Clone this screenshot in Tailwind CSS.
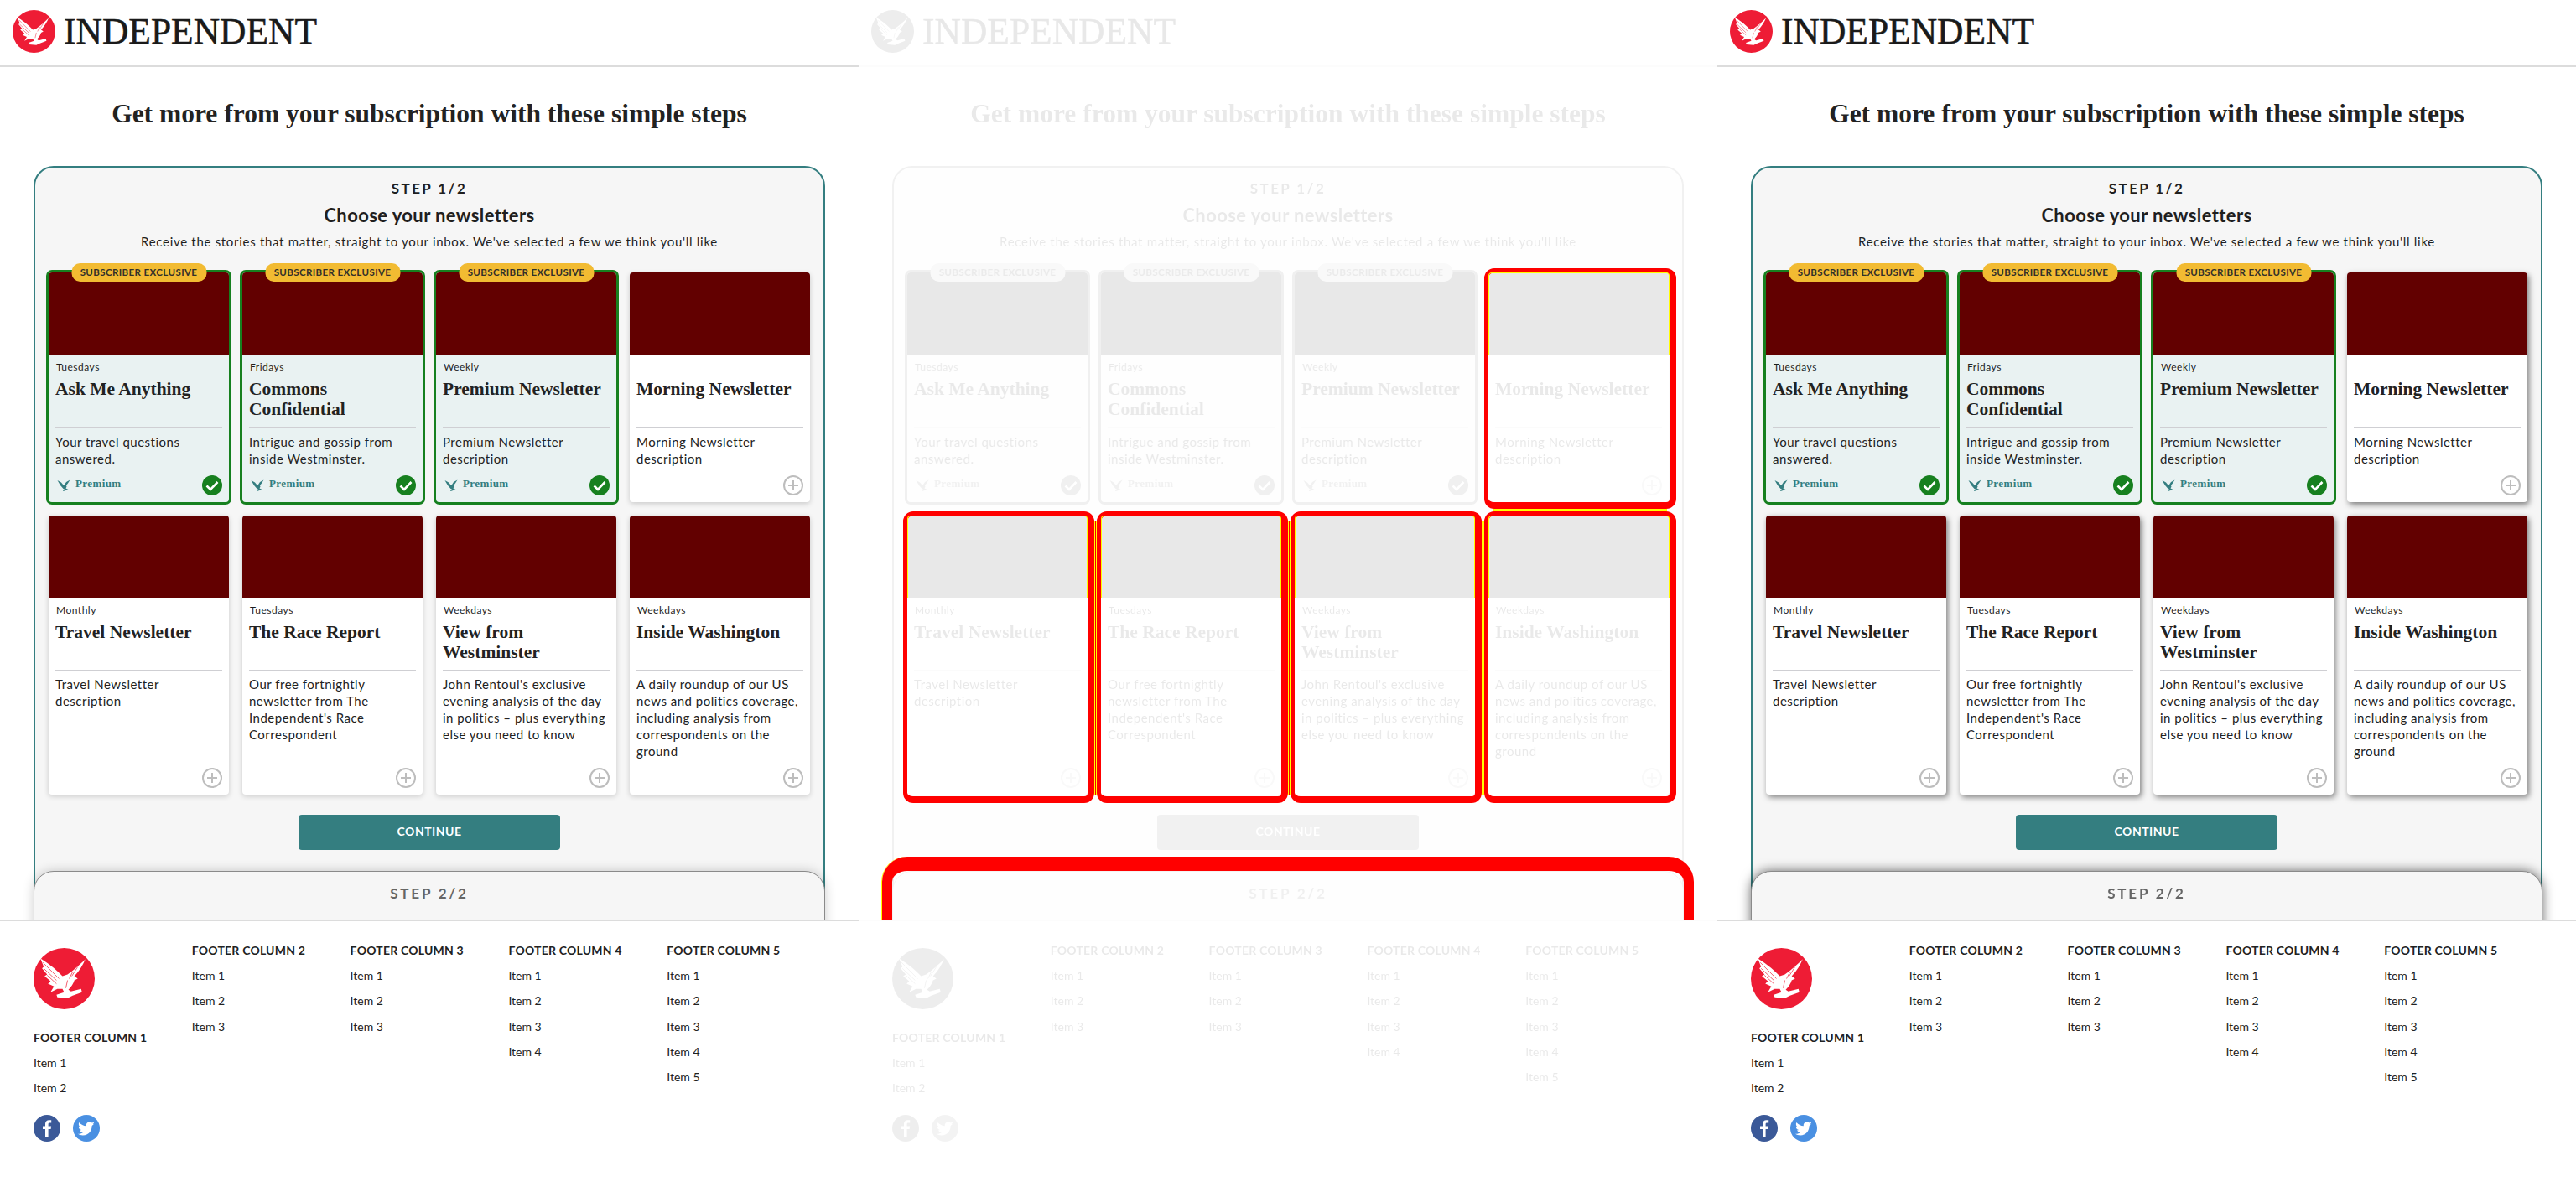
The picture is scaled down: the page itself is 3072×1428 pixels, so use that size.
<!DOCTYPE html>
<html lang="en">
<head>
  <meta charset="UTF-8">
  <title>Independent newsletters</title>
  <script src="https://cdn.jsdelivr.net/npm/@tailwindcss/browser@4"></script>
</head>
<body class="bg-white w-[3072px] h-[1428px] overflow-hidden font-['Lato',sans-serif] text-[#1f1f1f]">
  <div id="root" class="flex w-[3072px] h-[1428px]"></div>
  <template id="panel-tpl">
    <section class="panel relative w-[1024px] h-[1428px] shrink-0 overflow-hidden bg-white">
      <div class="faded h-full">
        <header class="h-[80px] border-b-2 border-[#dcdcdc] flex items-center pl-[15px] pb-[3px] gap-[10px]">
          <svg class="logo w-[51px] h-[51px]" viewBox="0 0 72 72"></svg>
          <span class="font-['Liberation_Serif',serif] text-[43.5px] leading-none text-[#1a1a1a] [-webkit-text-stroke:0.5px_#1a1a1a]">INDEPENDENT</span>
        </header>
        <main class="relative h-[1017px] overflow-hidden">
          <h1 class="font-['Liberation_Serif',serif] font-bold text-[31.5px] leading-[40px] text-center text-[#222] mt-[36px]">Get more from your subscription with these simple steps</h1>
          <div class="mx-[40px] mt-[42px] h-[900px] rounded-[24px] border-2 border-[#347e80] bg-[#f6f6f6] px-[16px] pt-[13px]">
            <p class="text-center font-bold text-[17px] leading-[24px] tracking-[2.4px]">STEP 1/2</p>
            <p class="text-center font-bold text-[22px] leading-[28px] tracking-[0.4px] mt-[6px]">Choose your newsletters</p>
            <p class="text-center text-[15px] leading-[20px] tracking-[0.7px] mt-[7px]">Receive the stories that matter, straight to your inbox. We've selected a few we think you'll like</p>
            <div class="cards grid grid-cols-4 gap-x-[16px] gap-y-[16px] mt-[27px]"></div>
            <button class="block mx-auto mt-[24px] w-[312px] h-[42px] rounded-[4px] bg-[#347e80] text-white font-bold text-[14px] tracking-[0.5px] pb-[4px]">CONTINUE</button>
          </div>
          <div class="step-two absolute left-[40px] top-[959px] w-[944px] h-[120px] rounded-[24px] border border-[#8a8a8a] bg-[#f6f6f6] text-center pt-[14px] font-bold text-[17px] leading-[24px] tracking-[2.8px] text-[#666]">STEP 2/2</div>
        </main>
        <footer class="relative bg-white border-t-2 border-[#dcdcdc] h-[331px] px-[40px] pt-[25px] grid grid-cols-5 items-start">
          <div class="col-one pt-[7px]"></div>
        </footer>
      </div>
    </section>
  </template>

  <script>
    const newsletters = [
      { tag: "Tuesdays", title: "Ask Me Anything", desc: "Your travel questions answered.", on: true },
      { tag: "Fridays", title: "Commons Confidential", desc: "Intrigue and gossip from inside Westminster.", on: true },
      { tag: "Weekly", title: "Premium Newsletter", desc: "Premium Newsletter description", on: true },
      { tag: "", title: "Morning Newsletter", desc: "Morning Newsletter description" },
      { tag: "Monthly", title: "Travel Newsletter", desc: "Travel Newsletter description" },
      { tag: "Tuesdays", title: "The Race Report", desc: "Our free fortnightly newsletter from The Independent's Race Correspondent" },
      { tag: "Weekdays", title: "View from Westminster", desc: "John Rentoul's exclusive evening analysis of the day in politics – plus everything else you need to know" },
      { tag: "Weekdays", title: "Inside Washington", desc: "A daily roundup of our US news and politics coverage, including analysis from correspondents on the ground" },
    ];

    // red roundel with the eagle, feather lines cut back in red
    const roundel = `
      <circle cx="36" cy="36" r="36" fill="#ee1c35"/>
      <path fill="#fff" d="M8 12C14 16 26 24 34 33L40 31C46 27 54 20 61 13C58 20 54 27 48 33L52 36L48 38C47 42 44 46 41 49L44 51L56 48L57 52L46 56L40 59L28 58L27 55L36 52L34 48L28 48L20 52L24 45L17 42L20 39L13 33L16 31L10 24L12 22Z"/>
      <path fill="none" stroke="#ee1c35" stroke-width="0.7" d="M11 17L30 36M12 24L27 38M16 32L27 42M46 28L42 36M52 22L45 33M40 38L38 47"/>`;

    function cardHtml(n, shadow) {
      return `
      <article class="relative flex flex-col rounded-[4px] ${n.on ? "bg-[#e9f2f2] outline-[3px] outline-[#17801f]" : "bg-white " + shadow}">
        ${n.on ? `<span class="absolute left-1/2 -translate-x-1/2 -top-[11px] w-[161px] h-[22px] rounded-[10px] bg-[#f2bb32] text-center text-[11.5px] leading-[22px] font-bold tracking-[0.4px] text-[#33302a]">SUBSCRIBER EXCLUSIVE</span>` : ""}
        <div class="h-[98px] rounded-t-[4px] bg-[#620000]"></div>
        <div class="flex flex-col flex-1 px-[8px] pt-[8px] pb-[8px]">
          <p class="h-[14px] text-[12px] leading-[14px] tracking-[0.5px] pl-[1px]">${n.tag}</p>
          <h3 class="h-[48px] mt-[7px] font-['Liberation_Serif',serif] font-bold text-[21.5px] leading-[24px] text-[#222]">${n.title}</h3>
          <div class="h-[1.5px] mt-[9px] bg-[#cfcfd3]"></div>
          <p class="mt-[6px] flex-1 text-[15px] leading-[20px] tracking-[0.5px] text-[#222]">${n.desc}</p>
          <div class="flex items-center justify-between h-[24px] mt-[10px]">
            ${n.on ? `<span class="flex items-center gap-[5px] pl-[2px] text-[#347e80]">
              <svg class="w-[17px] h-[16px]" viewBox="0 0 34 30" fill="#347e80"><path d="M1 3l9 5 5 6 3-1 4-6 9-5-5 8-4 5 1 3-2 4 6 3-12 4-1-2 4-3-3-1-7-8z"/></svg>
              <span class="font-['Liberation_Serif',serif] font-bold text-[13px] tracking-[0.4px] -mt-[3px]">Premium</span></span>
              <svg class="w-[24px] h-[24px]" viewBox="0 0 24 24"><circle cx="12" cy="12" r="12" fill="#17801f"/><path d="M5.500 12.500l4.500 4.500 8.500-9" fill="none" stroke="#fff" stroke-width="2.600"/></svg>`
            : `<span></span>
              <svg class="w-[24px] h-[24px]" viewBox="0 0 24 24" fill="none" stroke="#bdbdbd"><circle cx="12" cy="12" r="11" stroke-width="2"/><path d="M12 6v12M6 12h12" stroke-width="2"/></svg>`}
          </div>
        </div>
      </article>`;
    }

    function colHtml(name, count) {
      let items = "";
      for (let i = 1; i <= count; i++) items += `<li class="h-[30.300px] text-[14px] leading-[30px] text-[#222]">Item ${i}</li>`;
      return `<div><h4 class="font-bold text-[14px] leading-[20px] tracking-[0.2px] text-[#222] mb-[5px]">${name}</h4><ul>${items}</ul></div>`;
    }

    const colOne = `
      <svg class="w-[73px] h-[73px] mb-[24px]" viewBox="0 0 72 72">${roundel}</svg>
      ${colHtml("FOOTER COLUMN 1", 2)}
      <div class="flex gap-[15px] mt-[16px]">
        <svg class="w-[32px] h-[32px]" viewBox="0 0 32 32"><circle cx="16" cy="16" r="16" fill="#3b5998"/><path fill="#fff" d="M17.600 26v-9h3l.5-3.600h-3.500v-2.200c0-1 .3-1.700 1.800-1.700h1.800V6.300c-.4 0-1.500-.1-2.700-.1-2.700 0-4.500 1.600-4.500 4.600v2.600h-3V17h3v9z"/></svg>
        <svg class="w-[32px] h-[32px]" viewBox="0 0 32 32"><circle cx="16" cy="16" r="16" fill="#4a90e2"/><path fill="#fff" d="M26 10.200c-.7.3-1.500.5-2.400.6.900-.5 1.500-1.300 1.800-2.300-.8.5-1.700.8-2.600 1-1.600-1.700-4.200-1.700-5.800-.1-1 1-1.500 2.500-1.100 3.900-3.300-.2-6.400-1.700-8.500-4.300-1.100 1.900-.5 4.300 1.300 5.500-.7 0-1.300-.2-1.900-.5 0 2 1.400 3.700 3.300 4.100-.6.2-1.200.2-1.900.1.500 1.700 2.100 2.800 3.800 2.900-1.700 1.300-3.900 2-6 1.700 5 3.200 11.700 1.700 14.900-3.400 1.100-1.800 1.700-3.900 1.700-6v-.5c.9-.6 1.600-1.300 2.400-2.200z"/></svg>
      </div>`;

    const root = document.getElementById("root");
    const tpl = document.getElementById("panel-tpl");
    const variants = [
      { shadow: "shadow-[0_2px_6px_rgba(0,0,0,0.18)]", stepTwo: "shadow-[0_0_14px_rgba(0,0,0,0.2)]" },
      { shadow: "shadow-[0_2px_6px_rgba(0,0,0,0.18)]", stepTwo: "", faded: true },
      { shadow: "shadow-[2px_3px_7px_rgba(0,0,0,0.5)]", stepTwo: "shadow-[0_0_14px_rgba(0,0,0,0.6)]" },
    ];

    // highlights drawn over the faded middle panel
    const redBoxes = [
      { pos: "left-[746px] top-[320px] w-[229px] h-[287px]" },
      { pos: "left-[53px] top-[610px] w-[228px] h-[348px]" },
      { pos: "left-[284px] top-[610px] w-[228px] h-[348px]" },
      { pos: "left-[515px] top-[610px] w-[228px] h-[348px]" },
      { pos: "left-[746px] top-[610px] w-[229px] h-[348px]" },
    ];
    const seams = [
      "left-[281px] top-[622px] w-[3px] h-[326px] border-x",
      "left-[512px] top-[622px] w-[3px] h-[326px] border-x",
      "left-[743px] top-[622px] w-[3px] h-[326px] border-x",
      "left-[756px] top-[607px] w-[208px] h-[3px] border-y",
    ];

    variants.forEach(v => {
      const node = tpl.content.cloneNode(true);
      node.querySelector(".logo").innerHTML = roundel;
      node.querySelector(".cards").innerHTML = newsletters.map(n => cardHtml(n, v.shadow)).join("");
      node.querySelector(".col-one").innerHTML = colOne;
      node.querySelector("footer").insertAdjacentHTML("beforeend",
        colHtml("FOOTER COLUMN 2", 3) + colHtml("FOOTER COLUMN 3", 3) + colHtml("FOOTER COLUMN 4", 4) + colHtml("FOOTER COLUMN 5", 5));
      if (v.stepTwo) node.querySelector(".step-two").className += " " + v.stepTwo;
      const sec = node.querySelector(".panel");
      if (v.faded) {
        node.querySelector(".faded").className += " grayscale opacity-10";
        redBoxes.forEach(b => sec.insertAdjacentHTML("beforeend",
          `<div class="absolute ${b.pos} rounded-[12px] border-solid border-l-[5px] border-t-[5px] border-r-[8px] border-b-[8px] border-[#ff0000]">
            <div class="h-[98px] rounded-t-[4px] border-x border-t border-[#ffff00]"></div>
          </div>`));
        seams.forEach(s => sec.insertAdjacentHTML("beforeend",
          `<div class="absolute ${s} bg-[#ff0000] border-[#ffff00]"></div>`));
        sec.insertAdjacentHTML("beforeend",
          `<div class="absolute left-[28px] top-[1022px] w-[968px] h-[75px] rounded-t-[30px] border-solid border-x-[12px] border-t-[17px] border-[#ff0000] shadow-[-1px_0_0_#ffff00]"></div>`);
      }
      root.appendChild(node);
    });
  </script>
</body>
</html>
